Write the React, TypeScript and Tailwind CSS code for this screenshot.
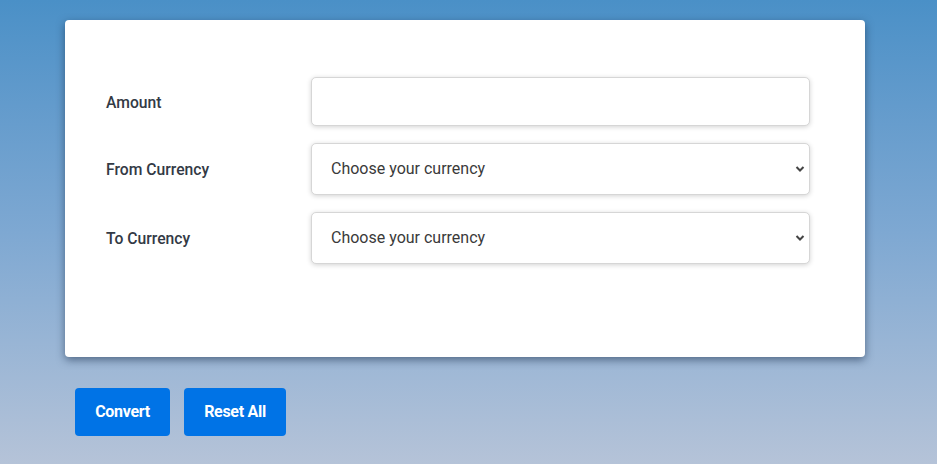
function Chevron() {
  return (
    <svg
      width="10"
      height="7"
      viewBox="0 0 10 7"
      className="pointer-events-none absolute right-[5px] top-1/2 -translate-y-1/2"
    >
      <path d="M1.5 1.5 L5 5 L8.5 1.5" fill="none" stroke="#444" strokeWidth="2" />
    </svg>
  );
}

function CurrencySelect() {
  return (
    <div className="relative">
      <select
        defaultValue=""
        className="h-[52px] w-full appearance-none rounded-[5px] border border-[#d6d6d6] bg-white pl-[19px] pr-8 text-[16px] text-[#3a3a3a] shadow-[0_1px_5px_rgba(0,0,0,0.18)] outline-none"
      >
        <option value="" disabled>
          Choose your currency
        </option>
        <option value="USD">USD</option>
        <option value="EUR">EUR</option>
      </select>
      <Chevron />
    </div>
  );
}

export default function App() {
  return (
    <div
      className="h-[464px] w-[937px] overflow-hidden bg-gradient-to-b from-[#4a90c7] via-[#7ea8d2] to-[#b5c3d8] pl-[65px] pt-[20px]"
      style={{ fontFamily: "Roboto, 'Liberation Sans', sans-serif" }}
    >
      <div className="h-[337px] w-[800px] rounded-[4px] bg-white pl-[41px] pr-[55px] pt-[57px] shadow-[0_3px_8px_rgba(20,40,70,0.55)]">
        <div className="grid grid-cols-[205px_1fr] items-center gap-y-[17px]">
          <label className="pt-[2px] text-[15.7px] font-medium text-[#333a45]">Amount</label>
          <input
            type="text"
            className="h-[49px] w-full rounded-[5px] border border-[#d6d6d6] bg-white px-[19px] text-[16px] shadow-[0_1px_5px_rgba(0,0,0,0.18)] outline-none"
          />

          <label className="pt-[2px] text-[15.7px] font-medium text-[#333a45]">From Currency</label>
          <CurrencySelect />

          <label className="pt-[2px] text-[15.7px] font-medium text-[#333a45]">To Currency</label>
          <CurrencySelect />
        </div>
      </div>

      <div className="mt-[31px] flex gap-[14px] pl-[10px]">
        <button className="h-[48px] w-[95px] rounded-[4px] bg-[#0073e6] text-[16px] font-bold tracking-[-0.3px] text-white">
          Convert
        </button>
        <button className="h-[48px] w-[102px] rounded-[4px] bg-[#0073e6] text-[16px] font-bold tracking-[-0.3px] text-white">
          Reset All
        </button>
      </div>
    </div>
  );
}
